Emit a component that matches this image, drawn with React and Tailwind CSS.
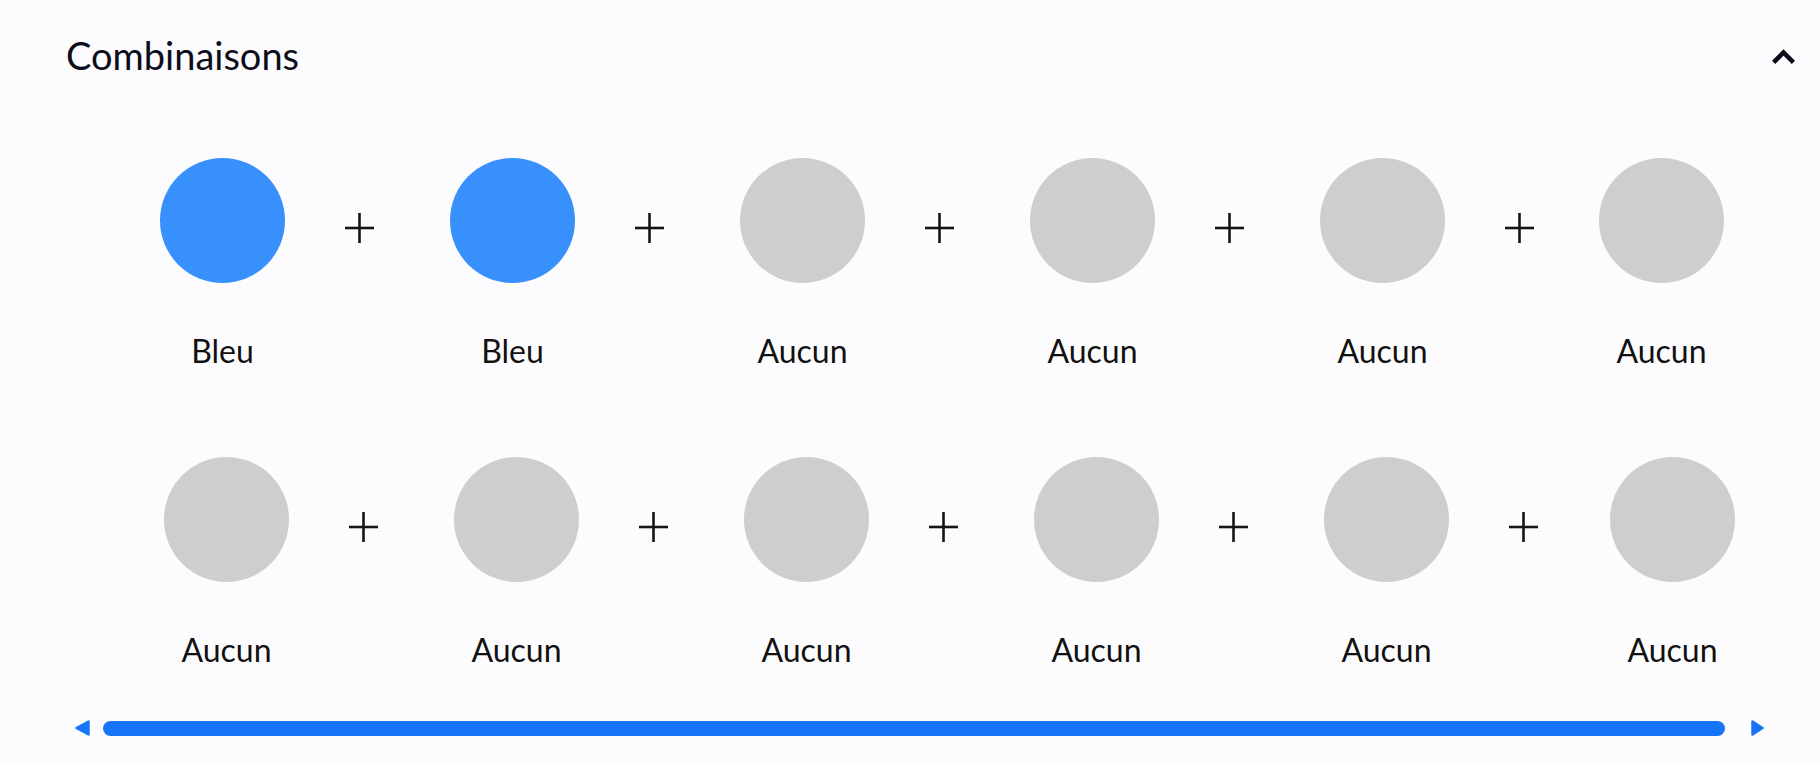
const blue = 'bg-[#3890fd]'

const row1 = [
  { name: 'Bleu', on: true },
  { name: 'Bleu', on: true },
  { name: 'Aucun' },
  { name: 'Aucun' },
  { name: 'Aucun' },
  { name: 'Aucun' },
]

const row2 = [
  { name: 'Aucun' },
  { name: 'Aucun' },
  { name: 'Aucun' },
  { name: 'Aucun' },
  { name: 'Aucun' },
  { name: 'Aucun' },
]

const Plus = ({ last, gap }) => (
  <div className={`flex h-[125px] items-center pt-[15px] ml-[60px] ${last ? gap : 'mr-[76px]'}`}>
    <svg width="29" height="30" viewBox="0 0 29 30">
      <line x1="0" y1="15" x2="29" y2="15" stroke="#141414" strokeWidth="2.6" />
      <line x1="14.5" y1="0" x2="14.5" y2="30" stroke="#141414" strokeWidth="2.6" />
    </svg>
  </div>
)

const Item = ({ name, on }) => (
  <div className="flex w-[125px] shrink-0 flex-col items-center">
    <div className={`h-[125px] w-[125px] rounded-full ${on ? blue : 'bg-[#cecece]'}`}></div>
    <div className="mt-[49px] text-[32px] leading-[38px] text-[#111111]">{name}</div>
  </div>
)

const Row = ({ items, gap, styles }) => (
  <div className={`flex items-start ${styles}`}>
    {items.map((it, i) => (
      <div key={i} className="flex items-start">
        <Item name={it.name} on={it.on} />
        {i < items.length - 1 && <Plus last={i === items.length - 2} gap={gap} />}
      </div>
    ))}
  </div>
)

const App = () => {
  return (
    <div
      className="h-[763px] w-full overflow-hidden bg-[#fcfcfe]"
      style={{ fontFamily: 'Lato, "Open Sans", sans-serif' }}
    >
      <div className="flex items-center justify-between pl-[66px] pr-[25px] pt-[32px]">
        <h2 className="text-[38px] leading-[46px] text-[#0d0d1a]">Combinaisons</h2>
        <svg width="23" height="16" viewBox="0 0 23 16" className="mt-[2px]">
          <polyline points="1.6,14.4 11.5,4.5 21.4,14.4" fill="none" stroke="#0b0b1a" strokeWidth="4.5" strokeLinejoin="miter" />
        </svg>
      </div>

      <div className="mt-[80px] flex flex-col">
        <Row items={row1} gap="mr-[65px]" styles="pl-[160px]" />
        <Row items={row2} gap="mr-[72px]" styles="mt-[87px] pl-[164px]" />
      </div>

      <div className="mt-[51px] flex h-[16px] items-center pl-[75px]">
        <svg width="15" height="16" viewBox="0 0 15 16">
          <polygon points="13.5,1.5 1.5,8 13.5,14.5" fill="#1874f6" stroke="#1874f6" strokeWidth="2.5" strokeLinejoin="round" />
        </svg>
        <div className="ml-[13px] h-[15px] w-[1622px] rounded-full bg-[#1874f6]"></div>
        <svg width="13" height="16" viewBox="0 0 13 16" className="ml-[26px]">
          <polygon points="1.5,1.5 11.5,8 1.5,14.5" fill="#1874f6" stroke="#1874f6" strokeWidth="2.5" strokeLinejoin="round" />
        </svg>
      </div>
    </div>
  )
}

export default App
